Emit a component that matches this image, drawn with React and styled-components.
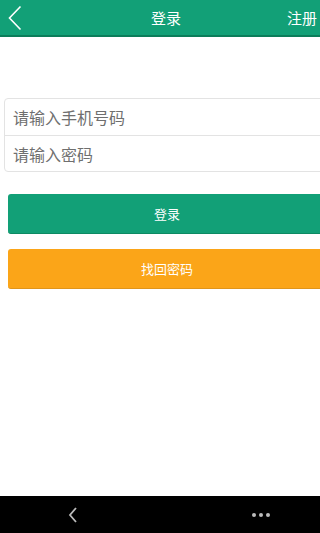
import React from "react";
import styled, { createGlobalStyle } from "styled-components";

const GlobalStyle = createGlobalStyle`
  html, body {
    margin: 0;
    padding: 0;
    background: #ffffff;
    overflow: hidden;
  }
  body {
    font-family: "Noto Sans CJK SC", "Noto Sans", sans-serif;
  }
`;

const Screen = styled.div`
  width: 320px;
  height: 533px;
  display: flex;
  flex-direction: column;
  background: #fff;
  overflow: hidden;
`;

const TopBar = styled.div`
  height: 35px;
  background: #12a077;
  border-bottom: 2px solid #0b7d5a;
  display: grid;
  grid-template-columns: 60px 1fr 60px;
  align-items: center;
  color: #fff;
`;

const BackButton = styled.div`
  padding-left: 8px;
  display: flex;
  align-items: center;
`;

const Title = styled.div`
  text-align: center;
  font-size: 15px;
  padding-left: 12px;
`;

const RightAction = styled.div`
  text-align: right;
  font-size: 15px;
  padding-right: 3px;
`;

const Content = styled.div`
  flex: 1;
  padding-top: 61px;
`;

const InputGroup = styled.div`
  margin-left: 4px;
  width: 330px;
  border: 1px solid #e3e3e3;
  border-radius: 4px;
  background: #fff;
`;

const Field = styled.input`
  display: block;
  width: 100%;
  box-sizing: border-box;
  height: 36px;
  border: none;
  border-top: ${(p) => (p.$first ? "none" : "1px solid #e3e3e3")};
  padding: 0 8px;
  font-family: inherit;
  font-size: 16px;
  color: #333;
  outline: none;
  background: transparent;
  &::placeholder {
    color: #6f6f6f;
  }
`;

const ActionButton = styled.button`
  display: flex;
  align-items: center;
  justify-content: center;
  margin-left: 8px;
  width: 330px;
  height: 40px;
  border: none;
  border-radius: 3px;
  background: ${(p) => p.$bg};
  border-bottom: 1px solid ${(p) => p.$edge};
  color: #fff;
  font-family: inherit;
  font-size: 13px;
  margin-top: ${(p) => p.$top}px;
  padding: 0;
  text-indent: -12px;
`;

const NavBar = styled.div`
  height: 37px;
  background: #000;
  display: flex;
  align-items: center;
  justify-content: space-between;
  padding: 0 50px 0 67px;
`;

const Dots = styled.div`
  display: flex;
  gap: 3px;
  span {
    width: 4px;
    height: 4px;
    border-radius: 50%;
    background: #bbb;
  }
`;

export default function App() {
  return (
    <>
      <GlobalStyle />
      <Screen>
        <TopBar>
          <BackButton>
            <svg width="14" height="26" viewBox="0 0 14 26">
              <path d="M12.5 1.5 L1.5 13 L12.5 24.5" fill="none" stroke="#fff" strokeWidth="1.6" />
            </svg>
          </BackButton>
          <Title>登录</Title>
          <RightAction>注册</RightAction>
        </TopBar>
        <Content>
          <InputGroup>
            <Field $first placeholder="请输入手机号码" />
            <Field placeholder="请输入密码" type="password" />
          </InputGroup>
          <ActionButton $bg="#12a077" $edge="#0d8a63" $top={22}>登录</ActionButton>
          <ActionButton $bg="#fba518" $edge="#e0951a" $top={15}>找回密码</ActionButton>
        </Content>
        <NavBar>
          <svg width="12" height="18" viewBox="0 0 12 18">
            <path d="M9 2 L3 9 L9 16" fill="none" stroke="#bbb" strokeWidth="1.8" />
          </svg>
          <Dots>
            <span />
            <span />
            <span />
          </Dots>
        </NavBar>
      </Screen>
    </>
  );
}
